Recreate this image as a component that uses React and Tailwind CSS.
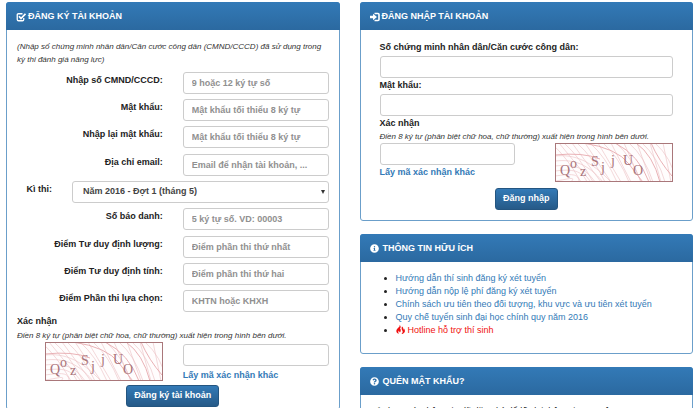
import { FaInfoCircle, FaQuestionCircle } from 'react-icons/fa';

const accountFields = [
    { id: 'cmnd', label: 'Nhập số CMND/CCCD:', placeholder: '9 hoặc 12 ký tự số' },
    {
        id: 'password',
        label: 'Mật khẩu:',
        placeholder: 'Mật khẩu tối thiểu 8 ký tự',
        type: 'password',
    },
    {
        id: 'password2',
        label: 'Nhập lại mật khẩu:',
        placeholder: 'Mật khẩu tối thiểu 8 ký tự',
        type: 'password',
    },
];

const scoreFields = [
    { id: 'score1', label: 'Điểm Tư duy định lượng:', placeholder: 'Điểm phần thi thứ nhất' },
    { id: 'score2', label: 'Điểm Tư duy định tính:', placeholder: 'Điểm phần thi thứ hai' },
    { id: 'score3', label: 'Điểm Phần thi lựa chọn:', placeholder: 'KHTN hoặc KHXH' },
];

const links = [
    'Hướng dẫn thí sinh đăng ký xét tuyển',
    'Hướng dẫn nộp lệ phí đăng ký xét tuyển',
    'Chính sách ưu tiên theo đối tượng, khu vực và ưu tiên xét tuyển',
    'Quy chế tuyển sinh đại học chính quy năm 2016',
];

const captchaChars = [
    ['Q', 5, 32],
    ['o', 15, 25],
    ['z', 25, 33],
    ['S', 36, 23],
    ['j', 46, 29],
    ['j', 56, 22],
    ['U', 68, 22],
    ['O', 78, 32],
];

function Input({ className = '', ...props }) {
    return (
        <input
            className={`block h-[22px] w-full min-w-0 rounded-[3px] border border-[#cccccc] bg-white px-2 text-[9px] font-bold text-[#555555] placeholder:text-ellipsis placeholder:text-[#909090] focus:outline-none ${className}`}
            {...props}
        />
    );
}

function Field({ id, label, placeholder, type = 'text' }) {
    return (
        <div className="grid grid-cols-2 gap-5">
            <label htmlFor={id} className="text-right leading-4">
                {label}
            </label>
            <Input id={id} type={type} placeholder={placeholder} />
        </div>
    );
}

function Panel({ icon, title, children, className = '' }) {
    return (
        <section className={`rounded-[3px] border border-[#6b9fca] bg-white ${className}`}>
            <h2 className="-mx-px -mt-px flex h-7 items-center gap-[2px] rounded-t-[3px] bg-linear-to-b from-[#337ab7] to-[#2b69a0] px-[10px] pt-px text-[9px] font-bold text-white uppercase">
                {icon}
                {title}
            </h2>
            {children}
        </section>
    );
}

function CheckIcon() {
    return (
        <svg viewBox="0 0 20 20" className="size-[10px]" fill="none" stroke="currentColor">
            <path
                d="M13 3.500H5Q2.500 3.500 2.500 6v9q0 2.500 2.500 2.500h8q2.500 0 2.500-2.500v-3"
                strokeWidth="2.600"
            />
            <path d="M6 8.500l4 4.500 9-9.500" strokeWidth="3.600" />
        </svg>
    );
}

function LoginIcon() {
    return (
        <svg viewBox="0 0 20 20" className="size-[10px]" fill="none">
            <path d="M9 3h7q2 0 2 2v10q0 2-2 2H9" stroke="currentColor" strokeWidth="3.200" />
            <path d="M0 7.500h6V3.500l8 6.500-8 6.500v-4H0z" fill="currentColor" />
        </svg>
    );
}

function FireIcon() {
    return (
        <svg
            viewBox="0 0 18 18"
            className="mr-[3px] inline-block size-[9px] align-[-1px]"
            fill="currentColor"
        >
            <path d="M7 0c1 3-1 4-3 6-3 3-4 5-3 8 1 2 3 3 5 4-2-3-2-5 0-7 0 2 1 3 2 4 2-3 2-6 0-8 2-2 2-5-1-7z" />
            <path d="M12 3c3 2 3 4 2 6 1 0 2-1 2-2 2 3 3 6 0 9-1 1-3 2-5 2 3-3 3-5 1-8-1-2-1-5 0-7z" />
        </svg>
    );
}

function Captcha() {
    const arcs = [0, 1, 2, 3, 4, 5];
    const slants = [0, 1, 2, 3, 4, 5, 6, 7, 8];

    return (
        <svg
            viewBox="0 0 118 39"
            className="block h-[39px] w-[118px] shrink-0 bg-[#fffdfd]"
            role="img"
            aria-label="Mã xác nhận"
        >
            <g fill="none" stroke="#ebc0c3" strokeWidth="0.6">
                {arcs.map((i) => (
                    <path
                        key={i}
                        d={`M0 ${13 + i * 5}C${20 - i} ${11 + i * 5} ${36 - i * 3} ${18 + i * 3} ${56 - i * 8} 39`}
                    />
                ))}
                {slants.map((i) => (
                    <path key={i} d={`M${i * 13 - 4} 0Q${i * 13 + 12} 14 ${i * 12 + 26} 39`} />
                ))}
                {slants.map((i) => (
                    <path key={i} d={`M${i * 13 + 4} 0L${i * 10 + 36} 39`} />
                ))}
            </g>
            <g stroke="#e6a9ae" strokeWidth="0.9" fill="none">
                <path d="M0 12Q28 9 45 16" />
                <path d="M28 0Q62 5 74 21T88 39" />
                <path d="M60 0Q84 12 94 39" />
                <path d="M81 0Q98 12 105 39" />
                <path d="M96 0Q104 18 117 33" />
            </g>
            <g
                fontFamily="Liberation Serif, serif"
                fontSize="14"
                fontWeight="400"
                fill="#a8747b"
            >
                {captchaChars.map(([char, x, y]) => (
                    <text key={x} x={x} y={y}>
                        {char}
                    </text>
                ))}
            </g>
            <rect x="0.5" y="0.5" width="117" height="38" fill="none" stroke="#a9777a" />
        </svg>
    );
}

function Hint({ children }) {
    return <p className="text-[8px] leading-[13px] font-normal text-[#333333] italic">{children}</p>;
}

function SubmitButton({ children }) {
    return (
        <button
            type="submit"
            className="mx-auto block h-[22px] rounded-[3px] border border-[#245580] bg-linear-to-b from-[#337ab7] to-[#265a88] px-[7px] text-[9px] text-white"
        >
            {children}
        </button>
    );
}

function RegisterPanel() {
    return (
        <Panel icon={<CheckIcon />} title="Đăng ký tài khoản" className="h-screen">
            <form className="px-[10px] pt-[10px] font-bold" onSubmit={(e) => e.preventDefault()}>
                <Hint>
                    (Nhập số chứng minh nhân dân/Căn cước công dân (CMND/CCCD) đã sử dụng trong kỳ
                    thi đánh giá năng lực)
                </Hint>
                <div className="mt-[6px] flex flex-col gap-[6px]">
                    <div className="flex flex-col gap-[5px]">
                        {accountFields.map((field) => (
                            <Field key={field.id} {...field} />
                        ))}
                    </div>
                    <div className="flex flex-col gap-[5px]">
                        <Field
                            id="email"
                            label="Địa chỉ email:"
                            placeholder="Email để nhận tài khoản, ..."
                        />
                        <div className="flex gap-5">
                            <label htmlFor="exam" className="w-[35px] text-right leading-4">
                                Kì thi:
                            </label>
                            <div className="relative flex-1">
                                <select
                                    id="exam"
                                    className="block h-[22px] w-full appearance-none rounded-[3px] border border-[#cccccc] bg-white px-[10px] text-[9px] font-bold text-[#444444]"
                                >
                                    <option>Năm 2016 - Đợt 1 (tháng 5)</option>
                                </select>
                                <svg
                                    viewBox="0 0 4 4"
                                    className="pointer-events-none absolute top-[9px] right-1 size-1"
                                    fill="#333333"
                                >
                                    <path d="M0 0h4L2 4z" />
                                </svg>
                            </div>
                        </div>
                        <Field id="sbd" label="Số báo danh:" placeholder="5 ký tự số. VD: 00003" />
                    </div>
                    <div className="flex flex-col gap-[5px]">
                        {scoreFields.map((field) => (
                            <Field key={field.id} {...field} />
                        ))}
                    </div>
                </div>
                <label htmlFor="registerCaptcha" className="mt-px block leading-4">
                    Xác nhận
                </label>
                <Hint>Điền 8 ký tự (phân biệt chữ hoa, chữ thường) xuất hiện trong hình bên dưới.</Hint>
                <div className="grid grid-cols-2 gap-5">
                    <div className="flex justify-end">
                        <Captcha />
                    </div>
                    <div className="pt-[2px]">
                        <Input id="registerCaptcha" type="text" />
                        <a href="#" className="block leading-[19px] text-[#337ab7]">
                            Lấy mã xác nhận khác
                        </a>
                    </div>
                </div>
                <SubmitButton>Đăng ký tài khoản</SubmitButton>
            </form>
        </Panel>
    );
}

function LoginPanel() {
    return (
        <Panel icon={<LoginIcon />} title="Đăng nhập tài khoản">
            <form
                className="px-[19px] pt-[10px] pb-[10px] font-bold"
                onSubmit={(e) => e.preventDefault()}
            >
                <label htmlFor="loginId" className="mb-[2px] block leading-[14px]">
                    Số chứng minh nhân dân/Căn cước công dân:
                </label>
                <Input id="loginId" type="text" />
                <label htmlFor="loginPassword" className="mb-[2px] block leading-[14px]">
                    Mật khẩu:
                </label>
                <Input id="loginPassword" type="password" />
                <label htmlFor="loginCaptcha" className="block leading-[14px]">
                    Xác nhận
                </label>
                <Hint>Điền 8 ký tự (phân biệt chữ hoa, chữ thường) xuất hiện trong hình bên dưới.</Hint>
                <div className="flex justify-between gap-10">
                    <div className="flex-1">
                        <Input id="loginCaptcha" type="text" />
                        <a href="#" className="block leading-[14px] text-[#337ab7]">
                            Lấy mã xác nhận khác
                        </a>
                    </div>
                    <Captcha />
                </div>
                <div className="mt-[6px]">
                    <SubmitButton>Đăng nhập</SubmitButton>
                </div>
            </form>
        </Panel>
    );
}

export default function App() {
    return (
        <main className="grid h-screen grid-cols-2 gap-5 overflow-hidden bg-white pt-[2px] pr-[7px] pl-[6px] font-['Liberation_Sans',Arial,sans-serif] text-[9px] text-[#222222]">
            <RegisterPanel />
            <div className="flex flex-col gap-[13px]">
                <LoginPanel />
                <Panel
                    icon={<FaInfoCircle className="mr-[2px] size-[9px]" />}
                    title="Thông tin hữu ích"
                >
                    <ul className="list-disc pt-[10px] pb-4 pl-[35px] leading-[13px] text-[#222222]">
                        {links.map((link) => (
                            <li key={link}>
                                <a href="#" className="text-[#337ab7]">
                                    {link}
                                </a>
                            </li>
                        ))}
                        <li>
                            <a href="#" className="text-[#f01010]">
                                <FireIcon />
                                Hotline hỗ trợ thí sinh
                            </a>
                        </li>
                    </ul>
                </Panel>
                <Panel
                    icon={<FaQuestionCircle className="mr-[2px] size-[9px]" />}
                    title="Quên mật khẩu?"
                >
                    <p className="px-[10px] pt-[10px] leading-[13px]">
                        Sử dụng các thông tin đã đăng ký để lấy lại thông tin truy cập.
                    </p>
                </Panel>
            </div>
        </main>
    );
}
